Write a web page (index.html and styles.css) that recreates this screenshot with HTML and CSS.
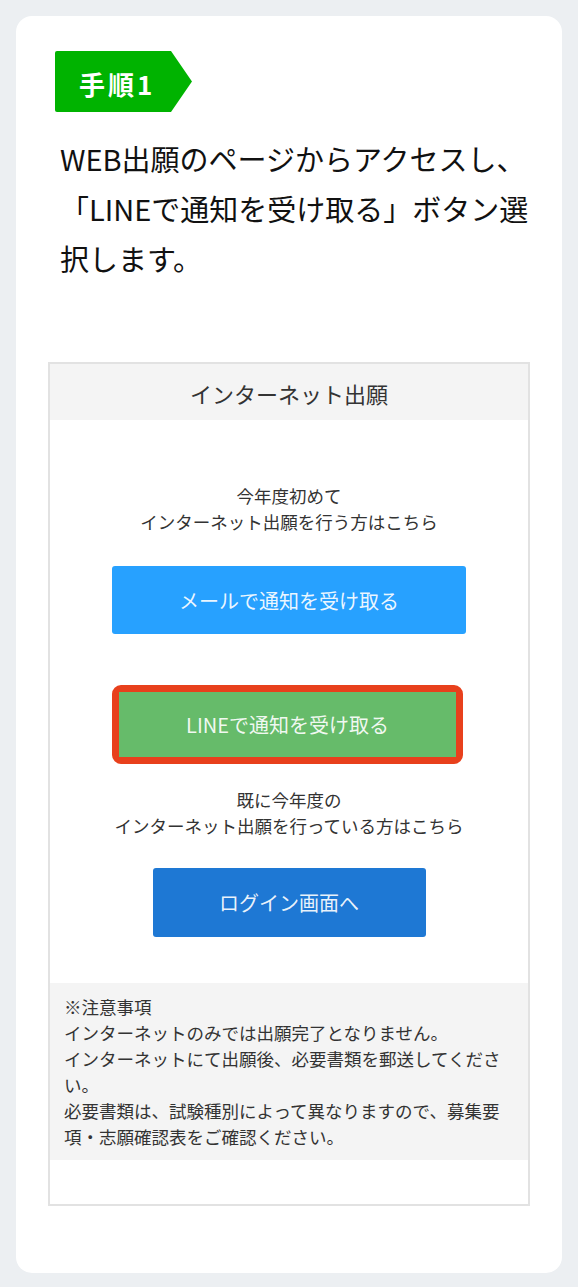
FILE: index.html
```html
<!DOCTYPE html>
<html lang="ja">
<head>
  <meta charset="UTF-8" />
  <meta name="viewport" content="width=device-width, initial-scale=1.0"/>
  <title>手順1 | LINEで通知を受け取る</title>
  <link rel="stylesheet" href="styles.css">
</head>
<body>
  <div class="card">
    <div class="step">手順1</div>
    <h2 class="lead">WEB出願のページからアクセスし、「LINEで通知を受け取る」ボタン選択します。</h2>

    <div class="shot">
      <div class="shot-head">インターネット出願</div>
      <div class="shot-body">
        <p class="note-center">今年度初めて<br>インターネット出願を行う方はこちら</p>
        <a class="btn btn-mail" href="#">メールで通知を受け取る</a>
        <div class="highlight">
          <a class="btn btn-line" href="#">LINEで通知を受け取る</a>
        </div>
        <p class="note-center second">既に今年度の<br>インターネット出願を行っている方はこちら</p>
        <a class="btn btn-login" href="#">ログイン画面へ</a>
        <div class="caution">
          ※注意事項<br>
          インターネットのみでは出願完了となりません。<br>
          インターネットにて出願後、必要書類を郵送してください。<br>
          必要書類は、試験種別によって異なりますので、募集要項・志願確認表をご確認ください。
        </div>
      </div>
    </div>
  </div>
</body>
</html>
```

FILE: styles.css
```css
body {
  font-family: "Noto Sans CJK JP", "Noto Sans", sans-serif;
  background-color: #eceff2;
  margin: 0;
  padding: 16px 16px 14px;
}

.card {
  background-color: white;
  border-radius: 16px;
  padding: 35px 32px 67px;
}

.step {
  margin-left: 7px;
  width: 137px;
  height: 61px;
  padding: 3px 0 0 24px;
  box-sizing: border-box;
  display: flex;
  align-items: center;
  background-color: #00b300;
  color: white;
  font-size: 26px;
  font-weight: bold;
  letter-spacing: 3px;
  clip-path: polygon(0 0, 116px 0, 137px 50%, 116px 100%, 0 100%);
  border-radius: 2px 0 0 2px;
}

.lead {
  margin: 21px 0 79px 12px;
  width: 472px;
  font-size: 29px;
  line-height: 50px;
  font-weight: 400;
  color: #111;
}

.shot {
  border: 2px solid #e2e2e2;
  color: #333;
}

.shot-head {
  height: 56px;
  background-color: #f4f4f4;
  display: flex;
  align-items: center;
  justify-content: center;
  font-size: 22px;
  padding-top: 2px;
  box-sizing: border-box;
}

.shot-body {
  display: flex;
  flex-direction: column;
  align-items: center;
  padding: 63px 0 44px;
}

.note-center {
  margin: 0;
  text-align: center;
  font-size: 17.5px;
  line-height: 26px;
}

.note-center.second {
  margin-top: 23px;
}

.btn {
  display: flex;
  align-items: center;
  justify-content: center;
  color: rgba(255,255,255,0.92);
  text-decoration: none;
  font-size: 20px;
  border-radius: 3px;
}

.btn-mail {
  margin-top: 31px;
  width: 354px;
  height: 68px;
  background-color: #27a1ff;
}

.highlight {
  margin-top: 51px;
  margin-right: 3px;
  border: 7px solid #e8401c;
  border-radius: 9px;
}

.btn-line {
  width: 337px;
  height: 65px;
  background-color: #66bb6a;
  border-radius: 0;
}

.btn-login {
  margin-top: 29px;
  width: 273px;
  height: 69px;
  background-color: #1e78d4;
}

.caution {
  align-self: stretch;
  margin-top: 46px;
  padding: 11px 18px 10px 14px;
  background-color: #f4f4f4;
  font-size: 17.5px;
  line-height: 26px;
}
```
